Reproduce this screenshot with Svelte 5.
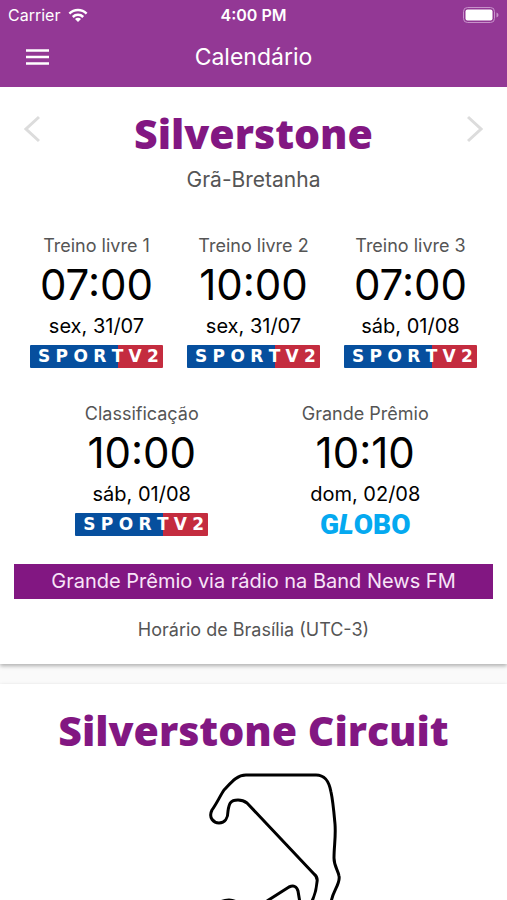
<script>
  const practice = [
    { name: 'Treino livre 1', time: '07:00', date: 'sex, 31/07', channel: 'sportv2' },
    { name: 'Treino livre 2', time: '10:00', date: 'sex, 31/07', channel: 'sportv2' },
    { name: 'Treino livre 3', time: '07:00', date: 'sáb, 01/08', channel: 'sportv2' }
  ];

  const race = [
    { name: 'Classificação', time: '10:00', date: 'sáb, 01/08', channel: 'sportv2' },
    { name: 'Grande Prêmio', time: '10:10', date: 'dom, 02/08', channel: 'globo' }
  ];
</script>

{#snippet session(item)}
  <article class="session">
    <h3>{item.name}</h3>
    <time class="hour">{item.time}</time>
    <p class="date">{item.date}</p>
    {#if item.channel === 'sportv2'}
      <div class="sportv">
        {#each 'SPORTV2' as letter}<span>{letter}</span>{/each}
      </div>
    {:else}
      <div class="globo">G<i>L</i>OBO</div>
    {/if}
  </article>
{/snippet}

<div class="app">
  <header>
    <div class="status">
      <div class="carrier">
        <span>Carrier</span>
        <svg width="20" height="15" viewBox="0 0 20 15" aria-hidden="true">
          <g fill="none" stroke="#fff" stroke-width="2.5">
            <path d="M1.4 5.6a12.2 12.2 0 0 1 17.2 0" />
            <path d="M4.8 9a7.4 7.4 0 0 1 10.4 0" />
          </g>
          <path d="M10 14l-3-3a4.2 4.2 0 0 1 6 0z" fill="#fff" />
        </svg>
      </div>
      <strong>4:00 PM</strong>
      <svg class="battery" width="36" height="16" viewBox="0 0 36 16" aria-hidden="true">
        <rect x="0.5" y="0.5" width="31" height="15" rx="4" fill="none" stroke="#c792ca" />
        <rect x="2.5" y="2.5" width="27" height="11" rx="2" fill="#fff" />
        <path d="M33.5 5.5q2 .6 2 2.500t-2 2.500z" fill="#c792ca" />
      </svg>
    </div>
    <div class="bar">
      <button class="menu" aria-label="Menu">
        <svg width="24" height="16" viewBox="0 0 24 16">
          <path d="M0 1.500h23M0 8h23M0 14.500h23" stroke="#fff" stroke-width="2.500" />
        </svg>
      </button>
      <h1>Calendário</h1>
    </div>
  </header>

  <main>
    <section class="card">
      <div class="heading">
        <button class="arrow" aria-label="Anterior">
          <svg width="16" height="28" viewBox="0 0 16 28">
            <path d="M15 2L2 14l13 12" fill="none" stroke="#dcdcdc" stroke-width="3" />
          </svg>
        </button>
        <h2>Silverstone</h2>
        <button class="arrow" aria-label="Próximo">
          <svg width="16" height="28" viewBox="0 0 16 28">
            <path d="M1 2l13 12L1 26" fill="none" stroke="#dcdcdc" stroke-width="3" />
          </svg>
        </button>
      </div>
      <p class="country">Grã-Bretanha</p>

      <div class="sessions">
        {#each practice as item}
          {@render session(item)}
        {/each}
      </div>
      <div class="sessions pair">
        {#each race as item}
          {@render session(item)}
        {/each}
      </div>

      <p class="radio">Grande Prêmio via rádio na Band News FM</p>
      <p class="timezone">Horário de Brasília (UTC-3)</p>
    </section>

    <section class="card circuit">
      <h2>Silverstone Circuit</h2>
      <svg class="track" width="180" height="240" viewBox="0 0 180 240" aria-label="Silverstone Circuit">
        <path
          d="M167 240V132C167 121 177 112 175 104C174 98 170 94 170 86C170 74 172 65 171 52C170 41 169 29 167 20C165 9 161 3 152 3H82C72 3 66 12 60 18C56 24 53 31 48 38C44 46 50 51 55 51C61 51 64 46 64 39C65 32 66 28 74 28Q79 28 83 31L150 102Q154 105 153 110Q152 122 147 131L141 140Q136 142 136 131L134 119Q132 112 125 115L103 129L80 142Q76 128 65 128Q52 128 48 142L30 180L90 225Z"
          fill="none"
          stroke="#000"
          stroke-width="3"
          stroke-linejoin="round"
        />
      </svg>
    </section>
  </main>
</div>

<style>
  :global(body) {
    margin: 0;
  }

  .app {
    display: flex;
    flex-direction: column;
    height: 100vh;
    background: #fafafa;
    color: #000;
    font-family: Inter, 'Liberation Sans', sans-serif;
    text-align: center;
  }

  h1,
  h2,
  h3,
  p {
    margin: 0;
    font-weight: 400;
  }

  button {
    padding: 0;
    border: 0;
    background: none;
    cursor: pointer;
  }

  svg {
    display: block;
  }

  header {
    background: #933895;
    color: #fff;
  }

  .status {
    display: grid;
    grid-template-columns: 1fr auto 1fr;
    align-items: center;
    height: 30px;
    padding: 0 8px;
    font-size: 16px;
  }

  .status strong {
    font-weight: 600;
  }

  .carrier {
    display: flex;
    align-items: center;
    gap: 8px;
  }

  .battery {
    justify-self: end;
  }

  .bar {
    display: grid;
    grid-template-columns: 24px 1fr 24px;
    align-items: center;
    height: 54px;
    padding: 0 26px 3px;
  }

  h1 {
    font-size: 23px;
    line-height: 28px;
  }

  main {
    flex: 1;
    overflow-y: auto;
    scrollbar-width: none;
  }

  .card {
    padding: 20px 14px;
    background: #fff;
    box-shadow: 0 2px 4px rgba(0, 0, 0, 0.3);
  }

  .heading {
    display: flex;
    align-items: center;
    justify-content: space-between;
    padding: 0 10px;
  }

  .arrow {
    padding-bottom: 8px;
  }

  h2 {
    color: #821782;
    font-family: 'Open Sans', sans-serif;
    font-size: 41px;
    font-weight: 800;
    line-height: 52px;
  }

  .country {
    margin: 7px 0 40px;
    color: #555;
    font-size: 21px;
    line-height: 28px;
  }

  .sessions {
    display: flex;
    padding: 0 4px;
    margin-bottom: 34px;
  }

  .pair {
    padding: 0 16px;
    margin-bottom: 28px;
  }

  .session {
    display: flex;
    flex: 1;
    flex-direction: column;
    align-items: center;
  }

  h3 {
    color: #555;
    font-size: 18px;
    line-height: 24px;
  }

  .hour {
    font-size: 42px;
    line-height: 54px;
  }

  .date {
    font-size: 20px;
    line-height: 28px;
    margin-bottom: 5px;
  }

  .sportv {
    display: flex;
    box-sizing: border-box;
    justify-content: space-between;
    width: 133px;
    padding: 0 4px 0 8px;
    border-radius: 1px;
    background: linear-gradient(90deg, #064f9e 66%, #c42c3f 66%);
    color: #fff;
    font-family: 'DejaVu Sans', sans-serif;
    font-size: 17px;
    font-weight: 700;
    line-height: 23px;
  }

  .globo {
    color: #05a9f0;
    font-family: Roboto, sans-serif;
    font-size: 28px;
    font-weight: 900;
    line-height: 23px;
  }

  .radio {
    background: #821782;
    color: #f8e4f8;
    font-size: 20px;
    line-height: 35px;
  }

  .timezone {
    margin-top: 17px;
    color: #555;
    font-size: 18px;
    line-height: 28px;
  }

  .circuit {
    margin-top: 20px;
  }

  .track {
    margin: 16px auto 0;
  }
</style>
